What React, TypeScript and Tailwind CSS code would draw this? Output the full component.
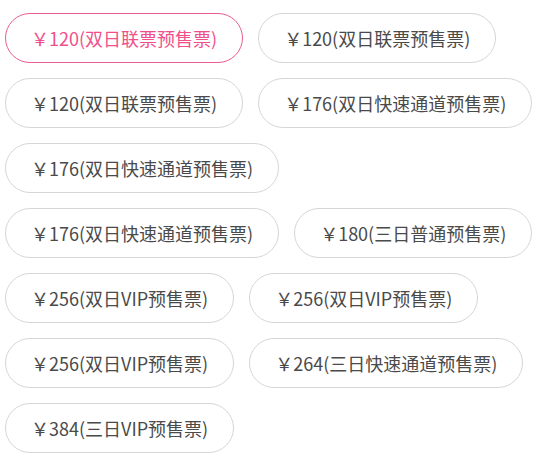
import React from "react";

const tickets = [
  "￥120(双日联票预售票)",
  "￥120(双日联票预售票)",
  "￥120(双日联票预售票)",
  "￥176(双日快速通道预售票)",
  "￥176(双日快速通道预售票)",
  "￥176(双日快速通道预售票)",
  "￥180(三日普通预售票)",
  "￥256(双日VIP预售票)",
  "￥256(双日VIP预售票)",
  "￥256(双日VIP预售票)",
  "￥264(三日快速通道预售票)",
  "￥384(三日VIP预售票)",
];

const App = () => {
  const [active, setActive] = React.useState(0);

  return (
    <div
      className="flex flex-wrap gap-[15px] pl-[5px] pt-[13px] bg-white w-[543px] min-h-[460px] content-start"
      style={{ fontFamily: '"Noto Sans CJK SC", "Noto Sans", sans-serif' }}
    >
      {tickets.map((t, i) => (
        <button
          key={i}
          onClick={() => setActive(i)}
          className={`h-[50px] rounded-full border px-[25px] text-[18px] leading-none whitespace-nowrap bg-white ${
            i === active
              ? "border-[#ec5a92] text-[#f0508a]"
              : "border-[#d6d6d6] text-[#4a4a4a]"
          }`}
        >
          {t}
        </button>
      ))}
    </div>
  );
};

export default App;
